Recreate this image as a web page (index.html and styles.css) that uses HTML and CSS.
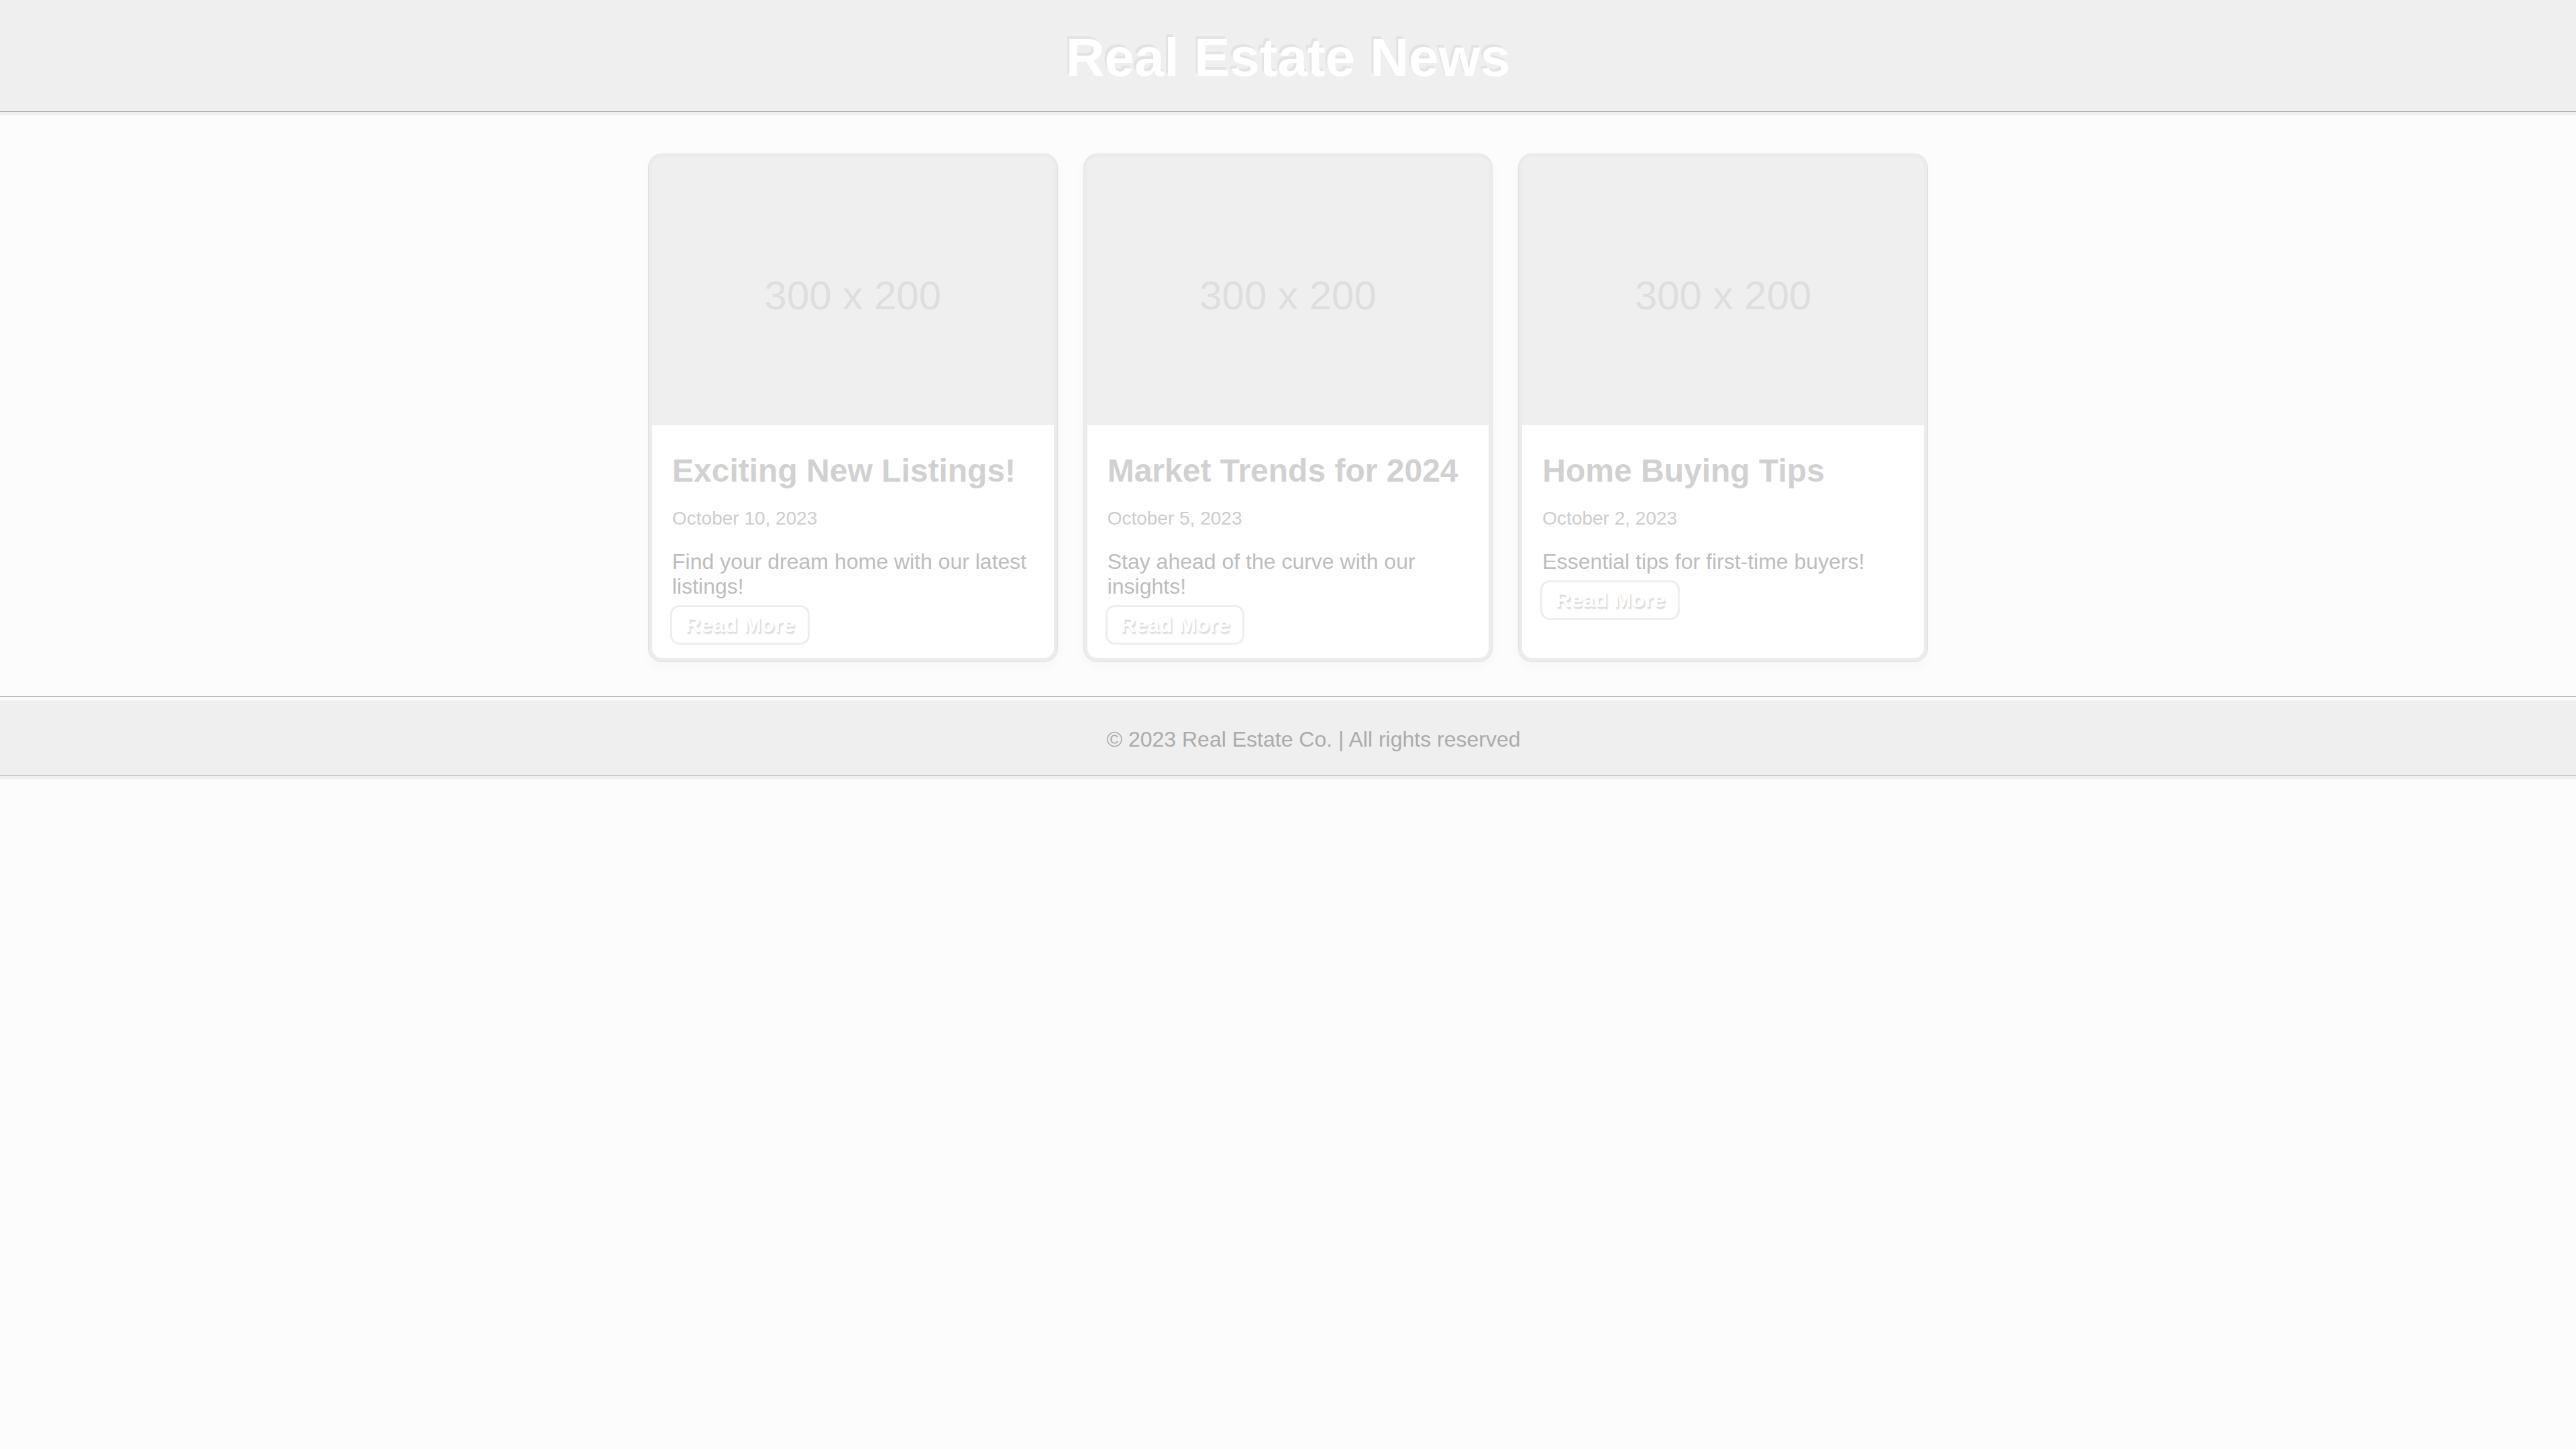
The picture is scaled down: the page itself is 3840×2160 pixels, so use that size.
FILE: index.html
```html
<!DOCTYPE html>
<html lang="en">
<head>
<meta charset="utf-8">
<title>Real Estate News</title>
<link rel="stylesheet" href="styles.css">
</head>
<body>
<header class="site-header">
  <h1 class="site-title">Real Estate News</h1>
</header>
<main class="news">
  <div class="news-grid">
    <article class="card">
      <div class="card-image"><span>300 x 200</span></div>
      <div class="card-body">
        <h2 class="card-title">Exciting New Listings!</h2>
        <p class="card-date">October 10, 2023</p>
        <p class="card-text">Find your dream home with our latest listings!</p>
        <div class="card-actions"><a class="read-more" href="#">Read More</a></div>
      </div>
    </article>
    <article class="card">
      <div class="card-image"><span>300 x 200</span></div>
      <div class="card-body">
        <h2 class="card-title">Market Trends for 2024</h2>
        <p class="card-date">October 5, 2023</p>
        <p class="card-text">Stay ahead of the curve with our insights!</p>
        <div class="card-actions"><a class="read-more" href="#">Read More</a></div>
      </div>
    </article>
    <article class="card">
      <div class="card-image"><span>300 x 200</span></div>
      <div class="card-body">
        <h2 class="card-title">Home Buying Tips</h2>
        <p class="card-date">October 2, 2023</p>
        <p class="card-text">Essential tips for first-time buyers!</p>
        <div class="card-actions"><a class="read-more" href="#">Read More</a></div>
      </div>
    </article>
  </div>
</main>
<footer class="site-footer">
  <p class="footer-text">&copy; 2023 Real Estate Co. | All rights reserved</p>
</footer>
</body>
</html>
```
FILE: styles.css
```css
html {
  background: #fcfcfc;
}

body {
  margin: 0;
  background: #fcfcfc;
  font-family: "Liberation Sans", Arial, sans-serif;
}

.site-header {
  background: #efefef;
  padding: 40px 0;
  text-align: center;
  box-shadow: inset 0 -5px 0 #efefef, inset 0 -6px 0 #9c9c9c;
}

.site-title {
  margin: 0;
  font-size: 80px;
  line-height: 92px;
  font-weight: bold;
  color: #ffffff;
  text-shadow: -3px -4px 0 #e3e3e3;
}

.news {
  padding: 58px 0 58px;
}

.news-grid {
  width: 1906px;
  margin: 0 auto;
  display: grid;
  grid-template-columns: repeat(3, 1fr);
  gap: 40px;
}

.card {
  background: #ffffff;
  border: 5px solid #ececec;
  border-radius: 20px;
  overflow: hidden;
  box-shadow: 0 0 0 1px #e0e0e0, 0 6px 18px rgba(0, 0, 0, 0.03);
  display: flex;
  flex-direction: column;
}

.card-image {
  aspect-ratio: 3 / 2;
  background: #efefef;
  display: flex;
  align-items: center;
  justify-content: center;
  padding-top: 12px;
  box-sizing: border-box;
}

.card-image span {
  font-size: 60px;
  line-height: 69px;
  color: #dedede;
}

.card-body {
  padding: 40px 30px 20px;
}

.card-title {
  margin: 0 0 28px;
  font-size: 48px;
  line-height: 55px;
  font-weight: bold;
  color: #d1d1d1;
}

.card-date {
  margin: 0 0 30px;
  font-size: 28px;
  line-height: 32px;
  color: #cdcdcd;
}

.card-text {
  margin: 0 0 9px;
  font-size: 32px;
  line-height: 37px;
  color: #bdbdbd;
}

.card-actions {
  display: flex;
}

.read-more {
  display: block;
  margin-left: -3px;
  padding: 8px 19px;
  border: 3px solid #eeeeee;
  border-radius: 14px;
  font-size: 32px;
  line-height: 37px;
  font-weight: bold;
  color: #ffffff;
  text-decoration: none;
  text-shadow: 2px 3px 2px #dadada;
}

.site-footer {
  background: #efefef;
  padding: 40px 0 40px 76px;
  text-align: center;
  box-shadow: 0 -5px 0 #fcfcfc, 0 -6px 0 #ababab, inset 0 -5px 0 #efefef, inset 0 -6px 0 #a6a6a6;
}

.footer-text {
  margin: 0;
  font-size: 32px;
  line-height: 37px;
  color: #ababab;
}
```
